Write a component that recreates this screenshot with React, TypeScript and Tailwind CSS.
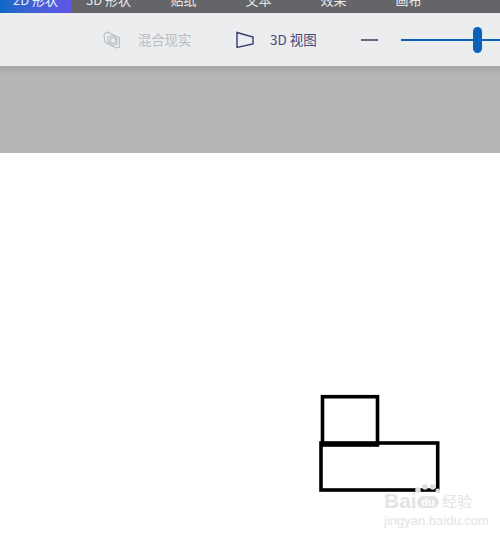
const font = { fontFamily: '"Noto Sans CJK SC", "Liberation Sans", sans-serif' };
const latin = { fontFamily: '"Liberation Sans", sans-serif' };

const tabs = ["3D 形状", "贴纸", "文本", "效果", "画布"];

function MixedIcon() {
  return (
    <svg width="18" height="18" viewBox="0 0 18 18" fill="none" stroke="#b9bbc6" strokeWidth="1.1">
      <path d="M1 3.5 L4 1 L16.5 6.5 L16.5 16 L13 17 L2 11.5 Z" />
      <path d="M5 6 L10 4.5 L14 7.5 L14 13 L10 14.5 L5 11.5 Z" />
      <circle cx="10" cy="9.5" r="2.8" />
    </svg>
  );
}

function ViewIcon() {
  return (
    <svg width="18" height="18" viewBox="0 0 18 18" fill="none" stroke="#3c3a72" strokeWidth="1.4">
      <path d="M1 1.5 L17 6 L17 13 L1 16.5 Z" />
    </svg>
  );
}

export default function App() {
  return (
    <div className="w-[500px] h-[535px] overflow-hidden bg-white flex flex-col relative" style={font}>
      <div className="h-[13px] bg-[#646569] flex overflow-hidden shrink-0">
        <div className="w-[71px] h-[13px] bg-gradient-to-r from-[#0a68c4] to-[#5f55e8] flex justify-center shrink-0">
          <span className="text-[13px] leading-[18px] mt-[-9px] text-[#e8ecf8] whitespace-nowrap">2D 形状</span>
        </div>
        <div className="flex">
          {tabs.map((t) => (
            <div key={t} className="w-[75px] h-[13px] flex justify-center shrink-0">
              <span className="text-[13px] leading-[18px] mt-[-9px] text-[#e6e6e8] whitespace-nowrap">{t}</span>
            </div>
          ))}
        </div>
      </div>
      <div className="h-[53px] bg-[#ebedee] flex items-center shrink-0 pl-[103px]">
        <MixedIcon />
        <span className="ml-[17px] text-[13.3px] text-[#babcc6] w-[53px] whitespace-nowrap">混合现实</span>
        <div className="ml-[45px]"><ViewIcon /></div>
        <span className="ml-[16px] text-[13.5px] text-[#4a4878] whitespace-nowrap w-[47px]">3D 视图</span>
        <div className="ml-[44px] w-[17px] h-[2px] bg-[#6a6a82]" />
        <div className="ml-[23px] flex-1 h-[2px] bg-[#0a63b8] relative">
          <div className="absolute left-[72px] top-[-12px] w-[9px] h-[26px] rounded-[5px] bg-[#0a63b8]" />
        </div>
      </div>
      <div className="h-[87px] shrink-0 bg-gradient-to-b from-[#a6a8a6] via-[#b4b6b5] via-[10%] to-[#b5b7b6]" />
      <div className="flex-1 relative">
        <svg className="absolute left-0 top-0" width="500" height="382" viewBox="0 153 500 382" fill="none" stroke="#000">
          <rect x="322.5" y="396.7" width="55" height="48.3" strokeWidth="3.6" />
          <rect x="321" y="443" width="116.7" height="47" strokeWidth="3.6" />
          <g stroke="none" fill="#dcdcdc">
            <circle cx="418" cy="490" r="2.8" />
            <circle cx="425" cy="487" r="2.8" />
            <circle cx="432.7" cy="487" r="2.8" />
            <circle cx="437.7" cy="490.7" r="2.2" />
          </g>
        </svg>
        <div className="absolute left-[384px] top-[336px] text-[#e4e4e4] leading-none whitespace-nowrap">
          <div className="h-[22px] flex items-center font-bold" style={latin}>
            <span className="text-[21px] w-[33px]">Bai</span>
            <span className="text-[11px] w-[22px] h-[12px] mt-[4px] leading-[12px] text-center bg-[#e4e4e4] text-white rounded-full">du</span>
            <span className="text-[15px] ml-[3px] font-normal" style={font}>经验</span>
          </div>
          <div className="text-[13px] mt-[3px]" style={latin}>jingyan.baidu.com</div>
        </div>
      </div>
    </div>
  );
}
